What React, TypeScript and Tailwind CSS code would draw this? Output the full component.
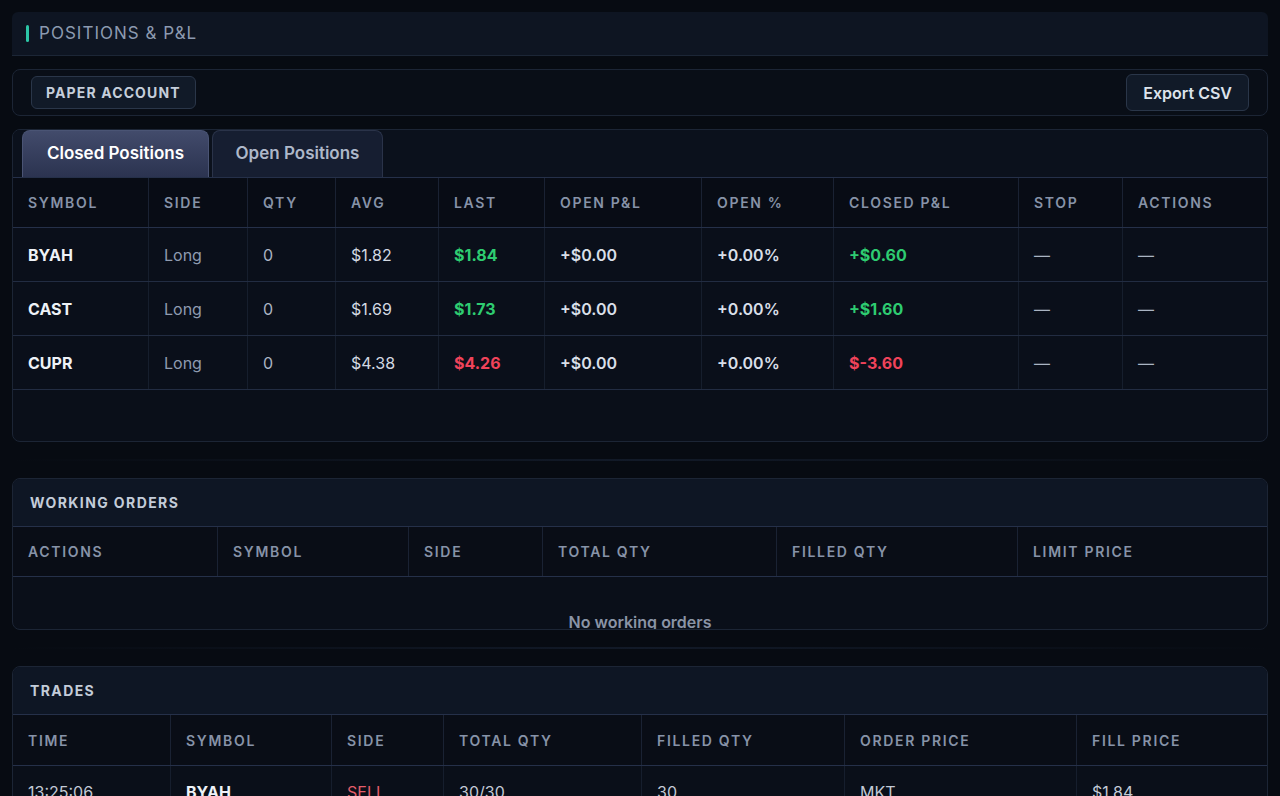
import React, { useState } from 'react';

// Positions & P&L panel
const font = { fontFamily: 'Inter, "Noto Sans", "Liberation Sans", sans-serif' };

const posCols = 'grid-cols-[136px_99px_88px_103px_106px_157px_132px_185px_104px_1fr]';
const ordCols = 'grid-cols-[205px_191px_134px_234px_241px_1fr]';
const trdCols = 'grid-cols-[158px_161px_112px_198px_203px_232px_1fr]';

const positions = [
  { sym: 'BYAH', side: 'Long', qty: '0', avg: '$1.82', last: '$1.84', up: true, openPl: '+$0.00', openPct: '+0.00%', closed: '+$0.60' },
  { sym: 'CAST', side: 'Long', qty: '0', avg: '$1.69', last: '$1.73', up: true, openPl: '+$0.00', openPct: '+0.00%', closed: '+$1.60' },
  { sym: 'CUPR', side: 'Long', qty: '0', avg: '$4.38', last: '$4.26', up: false, openPl: '+$0.00', openPct: '+0.00%', closed: '$-3.60' },
];

const HeadCell: React.FC<{ children: React.ReactNode; last?: boolean }> = ({ children, last }) => (
  <div className={`flex items-center px-[15px] text-[14px] font-semibold uppercase tracking-[0.12em] text-[#8793a8] ${last ? '' : 'border-r border-[#1a2233]'}`}>
    {children}
  </div>
);

const Cell: React.FC<{ children: React.ReactNode; className?: string; last?: boolean }> = ({ children, className = '', last }) => (
  <div className={`flex items-center px-[15px] text-[16px] ${last ? '' : 'border-r border-[#161e2d]'} ${className}`}>
    {children}
  </div>
);

const Divider = () => (
  <div className="h-[36px] flex items-center">
    <div className="h-[2px] w-full bg-gradient-to-r from-transparent via-[#121a28] to-transparent" />
  </div>
);

export default function App() {
  const [tab, setTab] = useState<'closed' | 'open'>('closed');

  return (
    <div className="min-h-screen w-full bg-[#070b12] px-[12px] pt-[12px] overflow-hidden" style={font}>
      {/* Panel title */}
      <div className="h-[44px] flex items-center gap-[10px] px-[14px] bg-[#0e1522] border-b border-[#1c2636] rounded-t-md">
        <div className="w-[3px] h-[17px] rounded-sm bg-[#2cc5a6]" />
        <span className="text-[17px] tracking-[0.06em] text-[#8c9ab0]">POSITIONS &amp; P&amp;L</span>
      </div>

      {/* Toolbar */}
      <div className="mt-[13px] h-[47px] flex items-center justify-between pl-[18px] pr-[18px] rounded-lg border border-[#1c2535] bg-[#090e17]">
        <button className="h-[33px] px-[14px] rounded-md border border-[#2a3649] bg-[#111a28] text-[14px] font-bold tracking-[0.08em] text-[#c5cedb]">
          PAPER ACCOUNT
        </button>
        <button className="h-[37px] px-[16px] rounded-md border border-[#2a3649] bg-[#111a28] text-[16px] font-semibold text-[#dde3ec]">
          Export CSV
        </button>
      </div>

      {/* Positions */}
      <div className="mt-[13px] h-[313px] rounded-lg border border-[#1c2535] bg-[#0a0f19] overflow-hidden">
        <div className="flex items-end gap-[3px] pl-[9px] h-[48px] bg-[#0b111c] border-b border-[#253049]">
          <button
            onClick={() => setTab('closed')}
            className={`h-[47px] w-[187px] rounded-t-lg border border-b-0 text-[17px] font-semibold ${tab === 'closed' ? 'border-[#4a5474] bg-gradient-to-b from-[#424b6b] to-[#2b3350] text-white' : 'border-[#2a3349] bg-[#161e31] text-[#aeb8c9]'}`}
          >
            Closed Positions
          </button>
          <button
            onClick={() => setTab('open')}
            className={`h-[47px] w-[171px] rounded-t-lg border border-b-0 text-[17px] font-semibold ${tab === 'open' ? 'border-[#4a5474] bg-gradient-to-b from-[#424b6b] to-[#2b3350] text-white' : 'border-[#2a3349] bg-[#161e31] text-[#aeb8c9]'}`}
          >
            Open Positions
          </button>
        </div>
        <div className={`grid ${posCols} h-[50px] bg-[#080c15] border-b border-[#253049]`}>
          {['Symbol', 'Side', 'Qty', 'Avg', 'Last', 'Open P&L', 'Open %', 'Closed P&L', 'Stop', 'Actions'].map((h, i) => (
            <HeadCell key={h} last={i === 9}>{h}</HeadCell>
          ))}
        </div>
        {positions.map((p) => (
          <div key={p.sym} className={`grid ${posCols} h-[54px] bg-[#0a0f1a] border-b border-[#222c42]`}>
            <Cell className="font-bold text-[#eef2f7]">{p.sym}</Cell>
            <Cell className="text-[#8f9bb0]">{p.side}</Cell>
            <Cell className="text-[#aab4c3]">{p.qty}</Cell>
            <Cell className="text-[#d3d9e2]">{p.avg}</Cell>
            <Cell className={`font-bold ${p.up ? 'text-[#2ecc71]' : 'text-[#f0435a]'}`}>{p.last}</Cell>
            <Cell className="font-semibold text-[#d9dfe8]">{p.openPl}</Cell>
            <Cell className="font-semibold text-[#d9dfe8]">{p.openPct}</Cell>
            <Cell className={`font-bold ${p.up ? 'text-[#2ecc71]' : 'text-[#f0435a]'}`}>{p.closed}</Cell>
            <Cell className="text-[#aab4c3]">—</Cell>
            <Cell className="text-[#aab4c3]" last>—</Cell>
          </div>
        ))}
      </div>

      <Divider />

      {/* Working orders */}
      <div className="h-[152px] rounded-lg border border-[#1c2535] bg-[#0a0f19] overflow-hidden">
        <div className="h-[48px] flex items-center px-[17px] bg-[#0e1624] border-b border-[#253049]">
          <span className="text-[14px] font-bold tracking-[0.1em] text-[#c3ccd9]">WORKING ORDERS</span>
        </div>
        <div className={`grid ${ordCols} h-[50px] bg-[#090d16] border-b border-[#253049]`}>
          {['Actions', 'Symbol', 'Side', 'Total Qty', 'Filled Qty', 'Limit Price'].map((h, i) => (
            <HeadCell key={h} last={i === 5}>{h}</HeadCell>
          ))}
        </div>
        <div className="h-[53px] flex justify-center pt-[33px] text-[16px] font-semibold text-[#8a94a6]">
          No working orders
        </div>
      </div>

      <Divider />

      {/* Trades */}
      <div className="h-[160px] rounded-lg border border-[#1c2535] bg-[#0a0f19] overflow-hidden">
        <div className="h-[48px] flex items-center px-[17px] bg-[#0e1624] border-b border-[#253049]">
          <span className="text-[14px] font-bold tracking-[0.1em] text-[#c3ccd9]">TRADES</span>
        </div>
        <div className={`grid ${trdCols} h-[51px] bg-[#090d16] border-b border-[#253049]`}>
          {['Time', 'Symbol', 'Side', 'Total Qty', 'Filled Qty', 'Order Price', 'Fill Price'].map((h, i) => (
            <HeadCell key={h} last={i === 6}>{h}</HeadCell>
          ))}
        </div>
        <div className={`grid ${trdCols} h-[52px]`}>
          <Cell className="text-[#c3cad6]">13:25:06</Cell>
          <Cell className="font-bold text-[#eef2f7]">BYAH</Cell>
          <Cell className="text-[#e35d6a]">SELL</Cell>
          <Cell className="text-[#c3cad6]">30/30</Cell>
          <Cell className="text-[#c3cad6]">30</Cell>
          <Cell className="text-[#c3cad6]">MKT</Cell>
          <Cell className="text-[#c3cad6]" last>$1.84</Cell>
        </div>
      </div>
    </div>
  );
}
